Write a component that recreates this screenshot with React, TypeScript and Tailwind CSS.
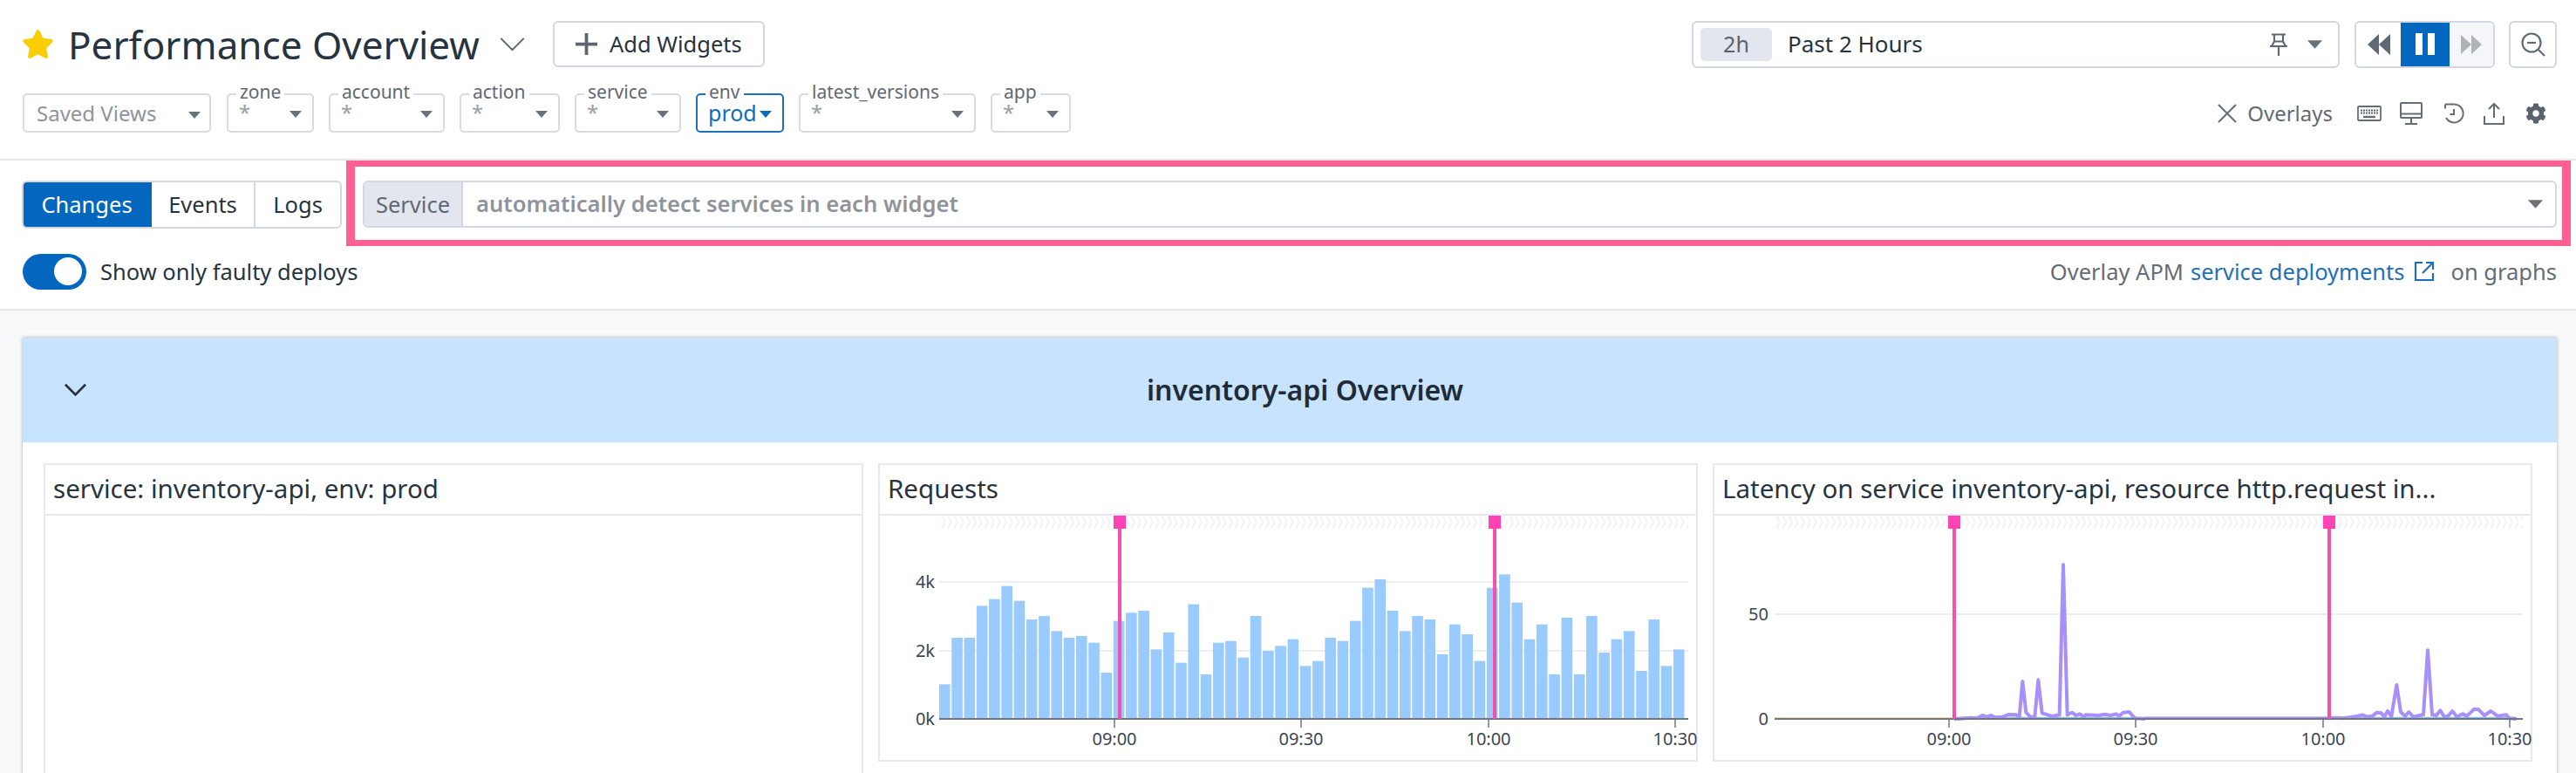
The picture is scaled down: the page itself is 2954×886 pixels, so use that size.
import { FaCog, FaStar } from 'react-icons/fa'

const requestTops = [
  793, 633, 633, 523, 500, 455, 506, 570, 558, 610, 633, 627, 650, 753, 575, 547, 540, 673, 615, 719, 518, 759, 650, 644, 701, 558, 678, 661, 638, 730,
  713, 633, 644, 575, 461, 432, 540, 610, 558, 570, 690, 587, 621, 713, 461, 415, 512, 638, 587, 759, 564, 759, 558, 684, 638, 610, 747, 570, 730, 673,
]

// traced from the latency graph, x/y in 3x crop coordinates
const latencyA = [
  [843, 913], [900, 908], [920, 910], [940, 900], [955, 905], [970, 900], [985, 907], [1010, 905], [1030, 897], [1055, 898], [1067, 905], [1078, 783], [1090, 890], [1105, 905], [1120, 905], [1132, 778], [1145, 892], [1165, 898], [1180, 903], [1205, 898], [1218, 382], [1232, 898], [1248, 890], [1262, 900], [1275, 895], [1290, 905], [1295, 898], [1340, 900], [1360, 896], [1380, 900], [1400, 895], [1410, 902], [1425, 890], [1445, 888], [1465, 910], [1500, 912],
]
const latencyB = [
  [650, 910], [680, 908], [700, 910], [740, 904], [765, 898], [780, 905], [800, 902], [815, 890], [830, 892], [840, 905], [852, 885], [865, 903], [883, 795], [897, 888], [912, 903], [925, 888], [940, 905], [975, 897], [990, 676], [1005, 897], [1020, 900], [1033, 883], [1047, 905], [1060, 902], [1075, 885], [1090, 905], [1110, 895], [1125, 902], [1150, 878], [1165, 880], [1185, 900], [1207, 885], [1230, 902], [1260, 898], [1270, 910], [1295, 912],
]

const filters = [
  { label: 'zone', width: 'w-[100px]' },
  { label: 'account', width: 'w-[133px]' },
  { label: 'action', width: 'w-[115px]' },
  { label: 'service', width: 'w-[122px]' },
]

function Caret({ className }: { className: string }) {
  return (
    <svg viewBox="0 0 14 8" className={`h-2 w-3.5 shrink-0 ${className}`}>
      <path d="M0 0h14L7 8z" fill="currentColor" />
    </svg>
  )
}

function FilterChip({ label, width, value = '*', active = false }: { label: string; width: string; value?: string; active?: boolean }) {
  return (
    <div className={`relative flex h-[45px] items-center justify-between rounded-[5px] border-2 bg-white pl-[12px] pr-[12px] ${width} ${active ? 'border-[#1d6fb8]' : 'border-[#d8dbe7]'}`}>
      <span className="absolute -top-[14px] left-[9px] bg-white px-[4px] text-[21px] leading-[20px] text-[#5f6873]">{label}</span>
      {active ? (
        <span className="text-[25px] leading-none text-[#0f6cbd]">{value}</span>
      ) : (
        <span className="-mt-[1px] text-[24px] leading-none text-[#9aa0a8]">{value}</span>
      )}
      <Caret className={active ? 'mt-[3px] text-[#0f6cbd]' : 'mt-[3px] text-[#6b7178]'} />
    </div>
  )
}

function ExternalLink() {
  return (
    <svg viewBox="0 0 24 24" className="h-[24px] w-[24px]" fill="none" stroke="#1f6fb8" strokeWidth="2.2">
      <path d="M10 2H2v20h20v-8" />
      <path d="M10 14 21.5 2.5M14 2h8v8" />
    </svg>
  )
}

function Chart({ children, left, yLabels, ticks, pins, id }: { children: React.ReactNode; left: number; yLabels: { y: number; text: string; x: number }[]; ticks: { x: number; text: string }[]; pins: number[]; id: string }) {
  const plotLeft = left === 1009 ? 68 : 69
  const plotRight = 927
  return (
    <svg width="936" height="280" className="block overflow-visible">
      <defs>
        <pattern id={id} width="7" height="15" patternUnits="userSpaceOnUse">
          <path d="M1 0l4 7.5-4 7.5" fill="none" stroke="#f2f3f7" strokeWidth="2" />
        </pattern>
      </defs>
      <rect x={plotLeft} y="0" width={plotRight - plotLeft} height="15" fill={`url(#${id})`} />
      {yLabels.map((label) => (
        <text key={label.text} x={label.x - left} y={label.y - 591 + 7} textAnchor="end" fontSize="20" fill="#3b4650">{label.text}</text>
      ))}
      {yLabels.filter((label) => label.text !== '0k' && label.text !== '0').map((label) => (
        <line key={label.text} x1={plotLeft} x2={plotRight} y1={label.y - 591} y2={label.y - 591} stroke="#e8e9ee" strokeWidth="1.5" />
      ))}
      {children}
      <line x1={plotLeft} x2={plotRight} y1="233" y2="233" stroke="#71757f" strokeWidth="2" />
      {ticks.map((tick) => (
        <g key={tick.text}>
          <line x1={tick.x - left} x2={tick.x - left} y1="233" y2="243" stroke="#71757f" strokeWidth="1.5" />
          <text x={tick.x - left} y="263" textAnchor="middle" fontSize="20" fill="#3b4650">{tick.text}</text>
        </g>
      ))}
      {pins.map((pin) => (
        <g key={pin}>
          <rect x={pin - left - 2} y="0" width="4" height="233" fill="#f550ae" />
          <rect x={pin - left - 7} y="0" width="14" height="15" fill="#ff43b4" />
        </g>
      ))}
    </svg>
  )
}

function Widget({ title, children, className = '' }: { title: string; children?: React.ReactNode; className?: string }) {
  return (
    <div className={`border-2 border-[#e7e8f0] bg-white ${className}`}>
      <div className="flex h-[58px] items-center border-b-2 border-[#e7e8f0] px-[9px] pb-[2px] text-[29.5px] text-[#27343f]">{title}</div>
      {children}
    </div>
  )
}

export default function App() {
  const toPoints = (points: number[][], originX: number) =>
    points.map(([x, y]) => `${originX + x / 3 - 1966},${520 + y / 3 - 591}`).join(' ')

  return (
    <div className="h-[886px] w-[2954px] overflow-hidden bg-[#f8f9fb] font-['Noto_Sans',sans-serif] text-[#27343f]">
      {/* Header */}
      <header className="h-[184px] border-b-2 border-[#e6e8ef] bg-white pt-[24px] pl-[25px] pr-[22px]">
        <div className="flex h-[53px] items-center">
          <FaStar className="h-[35px] w-[37px] text-[#fbcd05]" />
          <h1 className="ml-[16px] text-[44px] leading-none text-[#27343f]">Performance Overview</h1>
          <svg viewBox="0 0 30 18" className="ml-[23px] h-[17px] w-[29px]" fill="none" stroke="#59636d" strokeWidth="2">
            <path d="M1 2l14 14L29 2" />
          </svg>
          <button type="button" className="ml-[32px] flex h-[53px] w-[243px] items-center justify-center gap-[14px] rounded-[6px] border-2 border-[#d3d6e4] bg-white text-[25.5px] text-[#27343f]">
            <svg viewBox="0 0 24 24" className="h-[25px] w-[25px]" fill="none" stroke="#5b6670" strokeWidth="3.6"><path d="M12 0v24M0 12h24" /></svg>
            Add Widgets
          </button>

          <div className="ml-auto flex h-[54px] w-[743px] items-center rounded-[6px] border-2 border-[#d3d6e4] pl-[8px] pr-[18px]">
            <span className="flex h-[38px] w-[82px] items-center justify-center rounded-[5px] bg-[#e3e6ef] text-[25px] text-[#59636d]">2h</span>
            <span className="ml-[18px] text-[26px] text-[#27343f]">Past 2 Hours</span>
            <svg viewBox="0 0 22 26" className="ml-auto h-[26px] w-[22px]" fill="none" stroke="#5f6973" strokeWidth="2.2">
              <path d="M3 1.500h16M6 1.500v8M16 1.500v8M1 15h20M6 9.500 3 15M16 9.500l3 5.500M11 15v11M6 9.500h10" />
            </svg>
            <Caret className="ml-[22px] h-[10px] w-[17px] text-[#6b7178]" />
          </div>
          <div className="ml-[17px] flex h-[54px] w-[161px] overflow-hidden rounded-[6px] border-2 border-[#d3d6e4]">
            <div className="flex w-[51px] items-center justify-center bg-white">
              <svg viewBox="0 0 26 24" className="h-[24px] w-[26px]" fill="#5f6973"><path d="M13 0v24L0 12zM26 0v24L13 12z" /></svg>
            </div>
            <div className="flex w-[56px] items-center justify-center gap-[6px] bg-[#0367c0]">
              <div className="h-[25px] w-[8px] bg-white" />
              <div className="h-[25px] w-[8px] bg-white" />
            </div>
            <div className="flex flex-1 items-center justify-center bg-[#f5f6f9]">
              <svg viewBox="0 0 26 24" className="h-[24px] w-[24px]" fill="#aeb3b8"><path d="M0 0v24l13-12zM13 0v24l13-12z" /></svg>
            </div>
          </div>
          <div className="ml-[16px] flex h-[54px] w-[55px] items-center justify-center rounded-[6px] border-2 border-[#d3d6e4]">
            <svg viewBox="0 0 28 28" className="h-[28px] w-[28px]" fill="none" stroke="#5f6973" strokeWidth="2.2">
              <circle cx="12" cy="12" r="10.500" />
              <path d="M7 12h10" />
              <path d="M19.500 19.500 27 27" />
            </svg>
          </div>
        </div>

        <div className="mt-[30px] flex h-[45px] items-center">
          <div className="ml-[1px] flex h-[45px] w-[216px] items-center justify-between rounded-[5px] border-2 border-[#d8dbe7] pl-[14px] pr-[10px] text-[24px] text-[#8f949c]">
            Saved Views
            <Caret className="mt-1 text-[#6b7178]" />
          </div>
          <div className="ml-[18px] flex gap-[17px]">
            {filters.map((filter) => (
              <FilterChip key={filter.label} label={filter.label} width={filter.width} />
            ))}
            <FilterChip label="env" width="w-[101px]" value="prod" active />
            <FilterChip label="latest_versions" width="w-[203px]" />
            <FilterChip label="app" width="w-[92px]" />
          </div>

          <div className="ml-auto flex items-center text-[#646c75]">
            <svg viewBox="0 0 22 22" className="h-[22px] w-[22px]" fill="none" stroke="#646c75" strokeWidth="2"><path d="M1 1l20 20M21 1 1 21" /></svg>
            <span className="ml-[12px] text-[24px]">Overlays</span>
            <svg viewBox="0 0 28 18" className="ml-[28px] h-[18px] w-[28px]" fill="none" stroke="#646c75" strokeWidth="1.800">
              <rect x="1" y="1" width="26" height="16" rx="1" />
              <path d="M4 5.500h20M4 8.500h20" strokeDasharray="2 1" />
              <path d="M7 13h14" strokeWidth="2.400" />
            </svg>
            <svg viewBox="0 0 26 26" className="ml-[21px] h-[26px] w-[26px]" fill="none" stroke="#646c75" strokeWidth="2">
              <rect x="1" y="1" width="24" height="17" rx="1" />
              <path d="M1 13.500h24" />
              <path d="M13 18v6M6 25h14" />
            </svg>
            <svg viewBox="0 0 26 26" className="ml-[23px] h-[26px] w-[26px]" fill="none" stroke="#646c75" strokeWidth="2">
              <path d="M3 2.500h10a10.500 10.500 0 1 1-9 15.500" />
              <path d="M3 2.500v5M13 8v6H8.500" />
            </svg>
            <svg viewBox="0 0 24 26" className="ml-[21px] h-[26px] w-[24px]" fill="none" stroke="#646c75" strokeWidth="2">
              <path d="M12 18V2M6 8l6-6 6 6M1 16v9h22v-9" />
            </svg>
            <FaCog className="ml-[24px] mr-[12px] h-[24px] w-[24px] text-[#59636d]" />
          </div>
        </div>
      </header>

      {/* Change overlay controls */}
      <section className="border-b-2 border-[#e4e6ee] bg-white">
        <div className="flex h-[98px] pr-[6px]">
          <div className="ml-[25px] mt-[23px] flex h-[55px] w-[367px] overflow-hidden rounded-[6px] border-2 border-[#d3d6e4] text-[25.5px]">
            <div className="-m-[2px] flex w-[149px] items-center justify-center bg-[#0367c0] text-white">Changes</div>
            <div className="ml-[2px] flex w-[119px] items-center justify-center border-r-2 border-[#d3d6e4]">Events</div>
            <div className="flex flex-1 items-center justify-center">Logs</div>
          </div>
          <div className="ml-[5px] flex-1 border-x-[10px] border-y-[7px] border-[#ff5f92] pl-[9px] pr-[6px] pt-[16px]">
            <div className="flex h-[54px] items-center overflow-hidden rounded-[6px] border-2 border-[#d3d6e4] text-[25.5px]">
              <div className="flex h-full w-[113px] items-center justify-center border-r-2 border-[#d3d6e4] bg-[#e3e6ef] text-[#5f6973]">Service</div>
              <span className="ml-[15px] text-[25.6px] font-semibold text-[#8f949c]">automatically detect services in each widget</span>
              <Caret className="ml-auto mr-[14px] h-[10px] w-[17px] text-[#6b7178]" />
            </div>
          </div>
        </div>
        <div className="flex h-[72px] items-center pb-[14px] pl-[26px] pr-[22px] text-[25.5px]">
          <div className="flex h-[41px] w-[73px] items-center justify-end rounded-full bg-[#0367c0] pr-[5px]">
            <div className="h-[32px] w-[32px] rounded-full bg-white" />
          </div>
          <span className="ml-[16px] text-[#27343f]">Show only faulty deploys</span>
          <span className="ml-auto text-[#646c75]">Overlay APM</span>
          <span className="ml-[8px] text-[#1f6fb8]">service deployments</span>
          <span className="ml-[10px]"><ExternalLink /></span>
          <span className="ml-[19px] text-[#646c75]">on graphs</span>
        </div>
      </section>

      {/* Group panel */}
      <main className="ml-[26px] mt-[31px] w-[2906px] bg-white shadow-[0_0_4px_rgba(0,0,0,0.3)]">
        <div className="flex h-[120px] items-center bg-[#c8e3fe]">
          <svg viewBox="0 0 30 18" className="ml-[46px] h-[16px] w-[29px]" fill="none" stroke="#25323d" strokeWidth="3">
            <path d="M2 2l13 13L28 2" />
          </svg>
          <h2 className="ml-[1214px] text-[32px] font-semibold text-[#1f2c37]">inventory-api Overview</h2>
        </div>
        <div className="grid grid-cols-[940px_940px_940px] items-start gap-x-[17px] pl-[24px] pt-[24px]">
          <Widget title="service: inventory-api, env: prod" className="h-[500px]" />
          <Widget title="Requests" className="h-[342px]">
            <Chart
              id="hatch-requests"
              left={1009}
              yLabels={[{ y: 667, text: '4k', x: 1072 }, { y: 746, text: '2k', x: 1072 }, { y: 824, text: '0k', x: 1072 }]}
              ticks={[{ x: 1278, text: '09:00' }, { x: 1492, text: '09:30' }, { x: 1707, text: '10:00' }, { x: 1921, text: '10:30' }]}
              pins={[1284, 1714]}
            >
              {requestTops.map((top, i) => (
                <rect key={i} x={68 + i * 14.27} y={520 + top / 3 - 591} width="12.600" height={233 - (520 + top / 3 - 591)} fill="#99cbff" />
              ))}
            </Chart>
          </Widget>
          <Widget title="Latency on service inventory-api, resource http.request in..." className="h-[342px]">
            <Chart
              id="hatch-latency"
              left={1966}
              yLabels={[{ y: 704, text: '50', x: 2028 }, { y: 824, text: '0', x: 2028 }]}
              ticks={[{ x: 2235, text: '09:00' }, { x: 2449, text: '09:30' }, { x: 2664, text: '10:00' }, { x: 2878, text: '10:30' }]}
              pins={[2241, 2671]}
            >
              <line x1="69" x2="275" y1="232" y2="232" stroke="#f3c98b" strokeWidth="1.500" />
              <line x1="275" x2="705" y1="232" y2="232" stroke="#f3c98b" strokeWidth="1.500" />
              <line x1="275" x2="920" y1="231.500" y2="231.500" stroke="#7cc0f5" strokeWidth="1.500" />
              <polyline points={toPoints(latencyA, 1960)} fill="none" stroke="#a78ffc" strokeWidth="4" strokeLinejoin="round" />
              <polyline points={`${1960 + 1500 / 3 - 1966},232 ${2454 + 650 / 3 - 1966},232`} fill="none" stroke="#a78ffc" strokeWidth="3" />
              <polyline points={toPoints(latencyB, 2454)} fill="none" stroke="#a78ffc" strokeWidth="4" strokeLinejoin="round" />
            </Chart>
          </Widget>
        </div>
      </main>
    </div>
  )
}
